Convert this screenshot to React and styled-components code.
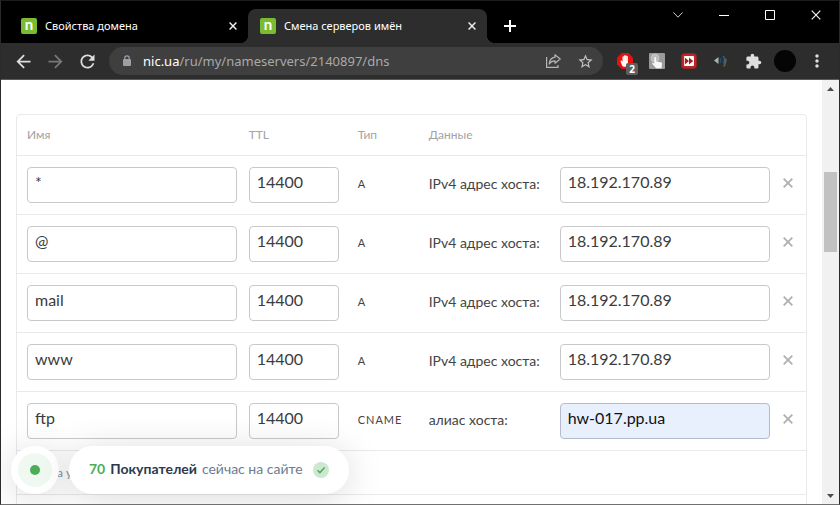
import React from "react";
import styled, { createGlobalStyle } from "styled-components";
import { MdArrowBack, MdArrowForward, MdRefresh, MdStarBorder, MdExtension, MdMoreVert } from "react-icons/md";

const GlobalStyle = createGlobalStyle`
  * { box-sizing: border-box; }
  body { margin: 0; background: #000; }
  button, input { font: inherit; margin: 0; }
`;

const uiFont = `"Noto Sans", "Open Sans", sans-serif`;
const pageFont = `Lato, "Open Sans", sans-serif`;

const Window = styled.div`
  height: 100vh;
  display: flex;
  flex-direction: column;
  overflow: hidden;
  background: #000;
  border: 1px solid #2b2b2b;
  border-top-color: #1c1c1c;
  border-bottom-color: #707070;
  font-family: ${uiFont};
`;

const TitleBar = styled.header`
  display: flex;
  height: 42px;
  flex: none;
  padding-left: 8px;
`;

const Tabs = styled.div`
  display: flex;
  align-items: flex-end;
`;

const Tab = styled.div`
  position: relative;
  display: flex;
  align-items: center;
  width: 239px;
  height: 34px;
  padding: 0 7px 0 12px;
  border-radius: 8px 8px 0 0;
  background: ${(p) => (p.$active ? "#2d2d2d" : "transparent")};

  &::before,
  &::after {
    content: "";
    display: ${(p) => (p.$active ? "block" : "none")};
    position: absolute;
    bottom: 0;
    width: 8px;
    height: 8px;
  }
  &::before {
    left: -8px;
    background: radial-gradient(circle at 0 0, transparent 8px, #2d2d2d 8px);
  }
  &::after {
    right: -8px;
    background: radial-gradient(circle at 100% 0, transparent 8px, #2d2d2d 8px);
  }
`;

const Favicon = styled.span`
  flex: none;
  width: 16px;
  height: 16px;
  border-radius: 2px;
  background: #79bc31;
  color: #fff;
  font: 700 15px/12px Lato, sans-serif;
  text-align: center;
`;

const TabTitle = styled.a`
  flex: 1;
  margin-left: 8px;
  color: #fff;
  font-size: 11px;
  line-height: 16px;
  white-space: nowrap;
  text-decoration: none;
`;

const IconButton = styled.button`
  display: flex;
  align-items: center;
  justify-content: center;
  flex: none;
  width: ${(p) => p.$w || 32}px;
  height: ${(p) => p.$h || 28}px;
  padding: 0;
  border: 0;
  background: none;
  color: ${(p) => p.$color || "#dedede"};
  position: relative;
`;

const WindowControls = styled.div`
  display: flex;
  margin-left: auto;
`;

const Toolbar = styled.nav`
  display: flex;
  align-items: center;
  flex: none;
  height: 37px;
  padding: 0 6px;
  background: #2d2d2d;
  border-bottom: 1px solid #5a5a5a;
`;

const AddressBar = styled.div`
  display: flex;
  align-items: center;
  flex: 1;
  height: 28px;
  margin: 0 6px;
  padding: 0 2px 0 14px;
  border-radius: 14px;
  background: #3f3f3f;
  color: #9aa0a6;
`;

const Url = styled.a`
  flex: 1;
  margin-left: 12px;
  color: #a9a9a9;
  font-size: 13px;
  line-height: 20px;
  text-decoration: none;
  white-space: nowrap;
`;

const Host = styled.span`
  color: #fff;
`;

const CountBadge = styled.span`
  position: absolute;
  right: 3px;
  bottom: 0;
  width: 12px;
  height: 12px;
  border-radius: 2px;
  background: #5e5e5e;
  color: #fff;
  font: 700 10px/12px ${uiFont};
`;

const Avatar = styled.span`
  width: 22px;
  height: 22px;
  border-radius: 50%;
  background: #050505;
`;

const Viewport = styled.div`
  position: relative;
  display: flex;
  flex: 1;
  min-height: 0;
  background: #fff;
  overflow: hidden;
`;

const Page = styled.main`
  flex: 1;
  min-width: 0;
  overflow: hidden;
  padding: 34px 15px 0;
  font-family: ${pageFont};
`;

const Panel = styled.section`
  border: 1px solid #e9e9e9;
  border-radius: 4px;
`;

const RecordTable = styled.table`
  width: 100%;
  table-layout: fixed;
  border-collapse: separate;
  border-spacing: 0;
`;

const Col = styled.col`
  width: ${(p) => p.$w};
`;

const HeadCell = styled.th`
  height: 41px;
  padding: 0 6px 2px;
  border-bottom: 1px solid #e9e9e9;
  color: #a3a3a3;
  font-size: 12px;
  font-weight: 400;
  text-align: left;
  &:first-child { padding-left: 10px; }
`;

const Cell = styled.td`
  padding: 11px 6px;
  border-bottom: 1px solid #e9e9e9;
  &:first-child { padding-left: 10px; }
`;

const TextCell = styled(Cell)`
  padding-bottom: 14px;
  color: #444;
  font-size: 14px;
  line-height: 20px;
  white-space: nowrap;
`;

const ActionCell = styled(Cell)`
  padding: 0 0 4px;
`;

const RecordType = styled.span`
  font-size: 11px;
  letter-spacing: 1px;
`;

const Field = styled.input`
  display: block;
  width: ${(p) => (p.$short ? "90px" : "100%")};
  height: 36px;
  padding: 0 7px 8px;
  border: 1px solid ${(p) => (p.$filled ? "#b4bccb" : "#c9c9c9")};
  border-radius: 4px;
  background: ${(p) => (p.$filled ? "#e8f0fe" : "transparent")};
  color: ${(p) => (p.$filled ? "#111" : "#3c3c3c")};
  font-size: 16px;
`;

const NoteCell = styled.td`
  height: 44px;
  padding: 0 40px;
  border-bottom: 1px solid #e9e9e9;
  color: #8a8f99;
  font-size: 12px;
`;

const NextCell = styled.td`
  height: 60px;
`;

const Scrollbar = styled.div`
  display: flex;
  flex-direction: column;
  align-items: center;
  flex: none;
  width: 17px;
  background: #f1f1f1;
`;

const Track = styled.div`
  flex: ${(p) => p.$part};
`;

const Thumb = styled.div`
  flex: 80;
  width: 13px;
  background: #c1c1c1;
`;

const VisitorWidget = styled.aside`
  position: absolute;
  left: 10px;
  bottom: 10px;
  display: flex;
  gap: 10px;
  font-family: ${pageFont};
`;

const Pulse = styled.div`
  display: flex;
  align-items: center;
  justify-content: center;
  width: 48px;
  height: 48px;
  border: 7px solid #fff;
  border-radius: 50%;
  background: #f0f9f1;
  box-shadow: 0 4px 36px rgba(0, 0, 0, 0.15);
`;

const Dot = styled.span`
  width: 10px;
  height: 10px;
  border-radius: 50%;
  background: #4bae57;
`;

const Bubble = styled.div`
  display: flex;
  align-items: center;
  height: 48px;
  padding: 0 20px;
  border-radius: 24px;
  background: #fff;
  box-shadow: 0 4px 36px rgba(0, 0, 0, 0.15);
  color: #6d7b92;
  font-size: 14px;
  line-height: 20px;
  white-space: nowrap;
  svg { margin-left: 10px; }
`;

const Message = styled.span`
  padding-bottom: 2px;
`;

const Count = styled.b`
  margin-right: 5px;
  color: #4bae57;
`;

const Who = styled.b`
  margin-right: 5px;
  color: #2b394d;
`;

const Cross = ({ size, stroke }) => (
  <svg width={size} height={size} viewBox="0 0 10 10" fill="none" stroke="currentColor" strokeWidth={stroke}>
    <path d="M.7.7 9.3 9.3M9.3.7.7 9.3" />
  </svg>
);

const LockIcon = () => (
  <svg width="8" height="12" viewBox="0 0 8 12" fill="none">
    <path d="M1.800 5V3a2.200 2.200 0 0 1 4.400 0v2" stroke="currentColor" strokeWidth="1.200" />
    <rect y="4" width="8" height="7" rx="1" fill="currentColor" />
  </svg>
);

const ShareIcon = () => (
  <svg width="17" height="16" viewBox="0 0 17 16" fill="none" stroke="#b5b5b5" strokeWidth="1.2">
    <path d="M1.6 4v10.4H13V12" />
    <path d="M10 1.7 15.2 6 10 10.2V7.8C7.4 7.8 5.6 8.8 4.2 11c.3-3.8 2.2-6.3 5.8-6.9z" strokeLinejoin="round" />
  </svg>
);

const BlockIcon = () => (
  <svg width="16" height="16" viewBox="0 0 16 16">
    <path d="M4.7 0h6.6L16 4.7v6.6L11.3 16H4.7L0 11.3V4.7z" fill="#e2130f" />
    <path d="M5 12.2 3.6 8.4c-.3-.9.8-1.3 1.2-.5l.7 1.2V4c0-1 1.2-1 1.3 0V3c0-1 1.4-1 1.4 0v-.2c.1-.9 1.4-.9 1.4 0v.8c.1-.9 1.3-.8 1.3.1v6.2c0 2.4-1 3.8-3 3.8-1.5 0-2.3-.4-2.9-1.500z" fill="#fff" />
    <path d="M6.8 4v4M8.2 3.5v4M9.6 4v4" stroke="#e98a88" strokeWidth=".3" />
  </svg>
);

const TouchIcon = () => (
  <svg width="16" height="16" viewBox="0 0 16 16">
    <rect width="16" height="16" rx="1" fill="#9b9b9b" />
    <circle cx="6" cy="5" r="4" fill="#bdbdbd" stroke="#cfcfcf" strokeWidth=".7" />
    <path d="M5.3 4.8c0-1.2 1.8-1.2 1.8 0v3.7l4.6.8c.9.2 1.4.8 1.3 1.7l-.5 4.200H7.200L3.300 10.900c-.4-.9.5-1.5 1.2-.9l.8.7z" fill="#f5f9fd" />
  </svg>
);

const SpeedIcon = () => (
  <svg width="16" height="16" viewBox="0 0 16 16">
    <rect x=".5" y=".5" width="15" height="15" rx="3" fill="#c12424" stroke="#8c2424" />
    <rect x="3" y="3" width="10" height="10" rx="1" fill="#fff" />
    <path d="M3.800 4.500 8 8l-4.200 3.500zM8 4.500 12.200 8 8 11.500z" fill="#a51d1d" />
  </svg>
);

const SoundIcon = () => (
  <svg width="14" height="12" viewBox="0 0 14 12" fill="none">
    <path d="M0 5.500 4.500 2v7z" fill="#a7b2b8" />
    <path d="M6.500 3v5" stroke="#284b68" strokeWidth="1.5" />
    <path d="M9 1c2 2 2 4.500.5 7.500" stroke="#27639a" strokeWidth="1.5" />
    <path d="M11.500 3.500c1 2-.1 5-1.700 8" stroke="#6c6042" strokeWidth="1.6" />
  </svg>
);

const ScrollArrow = ({ down }) => (
  <svg width="7" height="4" viewBox="0 0 7 4" fill="#4d4d4d">
    <path d={down ? "M0 0h7L3.500 4z" : "M0 4h7L3.500 0z"} />
  </svg>
);

const CheckIcon = () => (
  <svg width="16" height="16" viewBox="0 0 16 16" fill="none">
    <circle cx="8" cy="8" r="8" fill="#cce8d0" />
    <path d="m4.500 8.200 2.400 2.400 4.700-5" stroke="#4bae57" strokeWidth="1.5" />
  </svg>
);

const tabs = [
  { title: "Свойства домена", active: false },
  { title: "Смена серверов имён", active: true },
];

const ipLabel = "IPv4 адрес хоста:";
const records = [
  { name: "*", type: "A", label: ipLabel, value: "18.192.170.89" },
  { name: "@", type: "A", label: ipLabel, value: "18.192.170.89" },
  { name: "mail", type: "A", label: ipLabel, value: "18.192.170.89" },
  { name: "www", type: "A", label: ipLabel, value: "18.192.170.89" },
  { name: "ftp", type: "CNAME", label: "алиас хоста:", value: "hw-017.pp.ua", filled: true },
];

function BrowserChrome() {
  return (
    <>
      <TitleBar>
        <Tabs>
          {tabs.map((tab) => (
            <Tab key={tab.title} $active={tab.active}>
              <Favicon aria-hidden="true">n</Favicon>
              <TabTitle href="#">{tab.title}</TabTitle>
              <IconButton $w={16} $h={16} $color="#eee" aria-label="Закрыть вкладку">
                <Cross size={8} stroke={1.8} />
              </IconButton>
            </Tab>
          ))}
          <IconButton $w={46} $h={34} $color="#fff" aria-label="Новая вкладка">
            <svg width="12" height="12" viewBox="0 0 12 12" stroke="currentColor" strokeWidth="2">
              <path d="M6 0v12M0 6h12" />
            </svg>
          </IconButton>
        </Tabs>
        <WindowControls>
          <IconButton $w={46} $h={28} aria-label="Поиск вкладок">
            <svg width="10" height="6" viewBox="0 0 10 6" fill="none" stroke="#ccc">
              <path d="m.4.4 4.6 4.800L9.600.4" />
            </svg>
          </IconButton>
          <IconButton $w={46} $h={28} aria-label="Свернуть">
            <svg width="10" height="1" viewBox="0 0 10 1" fill="#fff"><path d="M0 0h10v1H0z" /></svg>
          </IconButton>
          <IconButton $w={46} $h={28} aria-label="Развернуть">
            <svg width="10" height="10" viewBox="0 0 10 10" fill="none" stroke="#fff"><path d="M.5.5h9v9h-9z" /></svg>
          </IconButton>
          <IconButton $w={46} $h={28} $color="#fff" aria-label="Закрыть">
            <Cross size={10} stroke={1.1} />
          </IconButton>
        </WindowControls>
      </TitleBar>
      <Toolbar>
        <IconButton aria-label="Назад"><MdArrowBack size={21} /></IconButton>
        <IconButton $color="#777" aria-label="Вперёд"><MdArrowForward size={21} /></IconButton>
        <IconButton aria-label="Обновить"><MdRefresh size={21} /></IconButton>
        <AddressBar>
          <LockIcon />
          <Url href="#"><Host>nic.ua</Host>/ru/my/nameservers/2140897/dns</Url>
          <IconButton aria-label="Поделиться"><ShareIcon /></IconButton>
          <IconButton $color="#c4c4c4" aria-label="В закладки"><MdStarBorder size={17} /></IconButton>
        </AddressBar>
        <IconButton aria-label="Блокировщик рекламы"><BlockIcon /><CountBadge>2</CountBadge></IconButton>
        <IconButton aria-label="Касание"><TouchIcon /></IconButton>
        <IconButton aria-label="Ускорение"><SpeedIcon /></IconButton>
        <IconButton aria-label="Звук"><SoundIcon /></IconButton>
        <IconButton aria-label="Расширения"><MdExtension size={17} /></IconButton>
        <IconButton aria-label="Профиль"><Avatar /></IconButton>
        <IconButton aria-label="Меню"><MdMoreVert size={20} /></IconButton>
      </Toolbar>
    </>
  );
}

function Records() {
  return (
    <Panel>
      <RecordTable>
        <colgroup>
          <Col $w="28.6%" />
          <Col $w="109px" />
          <Col $w="71px" />
          <Col $w="131px" />
          <Col $w="auto" />
          <Col $w="30px" />
        </colgroup>
        <thead>
          <tr>
            <HeadCell>Имя</HeadCell>
            <HeadCell>TTL</HeadCell>
            <HeadCell>Тип</HeadCell>
            <HeadCell colSpan={3}>Данные</HeadCell>
          </tr>
        </thead>
        <tbody>
          {records.map((r) => (
            <tr key={r.name}>
              <Cell><Field aria-label="Имя" defaultValue={r.name} /></Cell>
              <Cell><Field $short aria-label="TTL" defaultValue="14400" /></Cell>
              <TextCell><RecordType>{r.type}</RecordType></TextCell>
              <TextCell><label htmlFor={`value-${r.name}`}>{r.label}</label></TextCell>
              <Cell><Field id={`value-${r.name}`} $filled={r.filled} defaultValue={r.value} /></Cell>
              <ActionCell>
                <IconButton $w={24} $color="#b0b0b0" aria-label="Удалить запись"><Cross size={10} stroke={1.8} /></IconButton>
              </ActionCell>
            </tr>
          ))}
          <tr><NoteCell colSpan={6}>а у</NoteCell></tr>
          <tr><NextCell colSpan={6} /></tr>
        </tbody>
      </RecordTable>
    </Panel>
  );
}

export default function App() {
  return (
    <Window>
      <GlobalStyle />
      <BrowserChrome />
      <Viewport>
        <Page><Records /></Page>
        <VisitorWidget>
          <Pulse><Dot /></Pulse>
          <Bubble>
            <Message>
              <Count>70</Count>
              <Who>Покупателей</Who>
              сейчас на сайте
            </Message>
            <CheckIcon />
          </Bubble>
        </VisitorWidget>
        <Scrollbar>
          <IconButton $w={17} $h={17} aria-label="Прокрутить вверх"><ScrollArrow /></IconButton>
          <Track $part={75} />
          <Thumb />
          <Track $part={235} />
          <IconButton $w={17} $h={17} aria-label="Прокрутить вниз"><ScrollArrow down /></IconButton>
        </Scrollbar>
      </Viewport>
    </Window>
  );
}
